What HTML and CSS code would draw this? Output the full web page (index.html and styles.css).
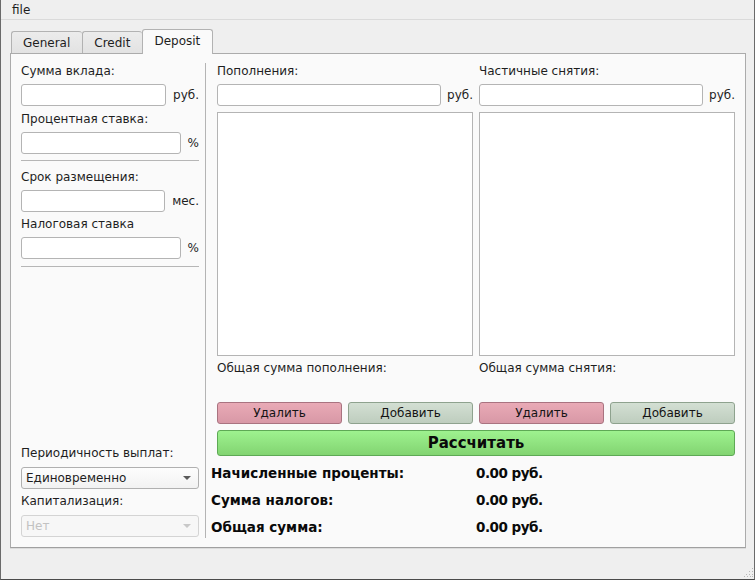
FILE: index.html
```html
<!DOCTYPE html>
<html lang="ru">
<head>
<meta charset="utf-8">
<title>Deposit</title>
<link rel="stylesheet" href="styles.css">
</head>
<body>
<div class="window">
  <div class="menubar"><span class="menu-item">file</span></div>
  <div class="main">
    <div class="tabbar">
      <div class="tab">General</div>
      <div class="tab">Credit</div>
      <div class="tab active">Deposit</div>
    </div>
    <div class="pane">
      <div class="left-col">
        <div class="lbl">Сумма вклада:</div>
        <div class="in-row"><div class="input"></div><span class="suffix">руб.</span></div>
        <div class="lbl">Процентная ставка:</div>
        <div class="in-row"><div class="input"></div><span class="suffix">%</span></div>
        <div class="hsep"></div>
        <div class="lbl">Срок размещения:</div>
        <div class="in-row"><div class="input"></div><span class="suffix">мес.</span></div>
        <div class="lbl lbl-tight">Налоговая ставка</div>
        <div class="in-row"><div class="input"></div><span class="suffix">%</span></div>
        <div class="hsep hsep-2"></div>
        <div class="spacer"></div>
        <div class="lbl">Периодичность выплат:</div>
        <div class="combo"><span>Единовременно</span><span class="arrow"></span></div>
        <div class="lbl">Капитализация:</div>
        <div class="combo disabled"><span>Нет</span><span class="arrow"></span></div>
      </div>
      <div class="vsep"></div>
      <div class="right-col">
        <div class="lists">
          <div class="list-col">
            <div class="lbl">Пополнения:</div>
            <div class="in-row"><div class="input"></div><span class="suffix">руб.</span></div>
            <div class="listbox"></div>
            <div class="lbl sum-lbl">Общая сумма пополнения:</div>
            <div class="btn-row">
              <div class="btn btn-del">Удалить</div>
              <div class="btn btn-add">Добавить</div>
            </div>
          </div>
          <div class="list-col">
            <div class="lbl">Частичные снятия:</div>
            <div class="in-row"><div class="input"></div><span class="suffix">руб.</span></div>
            <div class="listbox"></div>
            <div class="lbl sum-lbl">Общая сумма снятия:</div>
            <div class="btn-row">
              <div class="btn btn-del">Удалить</div>
              <div class="btn btn-add">Добавить</div>
            </div>
          </div>
          <div class="btn btn-calc">Рассчитать</div>
        </div>
        <div class="results">
          <div class="res-name">Начисленные проценты:</div><div class="res-val">0.00 руб.</div>
          <div class="res-name">Сумма налогов:</div><div class="res-val">0.00 руб.</div>
          <div class="res-name">Общая сумма:</div><div class="res-val">0.00 руб.</div>
        </div>
      </div>
    </div>
  </div>
  <svg class="grip" width="10" height="10" viewBox="0 0 10 10">
    <g fill="#b8b8b8">
      <rect x="8" y="0" width="1" height="1"/>
      <rect x="5" y="3" width="1" height="1"/><rect x="8" y="3" width="1" height="1"/>
      <rect x="2" y="6" width="1" height="1"/><rect x="5" y="6" width="1" height="1"/><rect x="8" y="6" width="1" height="1"/>
      <rect x="0" y="8" width="1" height="1"/><rect x="3" y="8" width="1" height="1"/><rect x="6" y="8" width="1" height="1"/><rect x="8" y="8" width="1" height="1"/>
    </g>
  </svg>
</div>
</body>
</html>
```
FILE: styles.css
```css
* { box-sizing: border-box; }
html, body { margin: 0; padding: 0; }
body {
  font-family: "DejaVu Sans", "Liberation Sans", sans-serif;
  font-size: 12px;
  color: #1e1e1e;
  background: #efefef;
}
.window {
  position: relative;
  width: 755px;
  height: 580px;
  background: #efefef;
  border-left: 1px solid #6a6a6a;
  border-right: 1px solid #6a6a6a;
  border-bottom: 1px solid #4a4a4a;
}
.menubar {
  height: 20px;
  line-height: 20px;
  border-bottom: 1px solid #dadada;
  padding-left: 11px;
}
.main {
  padding-left: 9px;
  padding-top: 9px;
}
.tabbar {
  display: flex;
  align-items: flex-end;
  height: 24px;
  padding-left: 1px;
}
.tab {
  height: 22px;
  line-height: 22px;
  padding: 0 12px 0 11px;
  border: 1px solid #b2b2b2;
  border-bottom: none;
  border-right: none;
  border-radius: 3px 3px 0 0;
  background: linear-gradient(#ececec, #e2e2e2);
  color: #1e1e1e;
}
.tab.active {
  height: 25px;
  line-height: 23px;
  margin-bottom: -1px;
  background: #fafafa;
  border-right: 1px solid #b2b2b2;
  position: relative;
  z-index: 1;
}
.pane {
  width: 736px;
  height: 495px;
  background: #fafafa;
  border: 1px solid #ababab;
  border-bottom-color: #a0a0a0;
  box-shadow: 0 1px 0 #dcdcdc;
  padding: 8px 9px 9px 10px;
  display: flex;
}
.left-col {
  width: 178px;
  height: 475px;
  display: flex;
  flex-direction: column;
}
.lbl {
  height: 18px;
  line-height: 18px;
  white-space: nowrap;
}
.lbl-tight { margin-top: -1px; }
.in-row {
  display: flex;
  align-items: center;
  gap: 7px;
  margin: 4px 0 4px;
}
.input {
  flex: 1;
  height: 22px;
  background: #ffffff;
  border: 1px solid #b4b4b4;
  border-radius: 3px;
}
.suffix { white-space: nowrap; }
.hsep {
  height: 1px;
  background: #b6b6b6;
  margin: 2px 0 7px;
}
.hsep-2 { margin-top: 3px; }
.spacer { flex: 1; }
.combo {
  height: 22px;
  margin: 5px 0 3px;
  border: 1px solid #b0b0b0;
  border-radius: 3px;
  background: linear-gradient(#fdfdfd, #f2f2f2);
  display: flex;
  align-items: center;
  justify-content: space-between;
  padding: 0 7px 0 4px;
}
.combo:last-child { margin-bottom: 0; }
.arrow {
  width: 0;
  height: 0;
  border-left: 4px solid transparent;
  border-right: 4px solid transparent;
  border-top: 4px solid #5a5a5a;
}
.combo.disabled {
  color: #c2c2c2;
  border-color: #d4d4d4;
  background: #f7f7f7;
}
.combo.disabled .arrow { border-top-color: #c8c8c8; }
.vsep {
  width: 1px;
  background: #b4b4b4;
  margin: 1px 5px 0 6px;
}
.right-col {
  width: 524px;
  display: flex;
  flex-direction: column;
}
.lists {
  padding-left: 6px;
  display: grid;
  grid-template-columns: 256px 256px;
  column-gap: 6px;
}
.list-col {
  display: flex;
  flex-direction: column;
}
.list-col .in-row { gap: 6px; margin-bottom: 0; }
.listbox {
  height: 244px;
  margin-top: 6px;
  background: #ffffff;
  border: 1px solid #b4b4b4;
}
.sum-lbl { margin-top: 3px; }
.btn-row {
  display: flex;
  gap: 6px;
  margin-top: 25px;
}
.btn {
  height: 22px;
  line-height: 20px;
  text-align: center;
  border-radius: 3px;
  color: #141414;
}
.btn-row .btn { flex: 1; }
.btn-del {
  background: linear-gradient(#e9aab6, #d898a6);
  border: 1px solid #a97380;
}
.btn-add {
  background: linear-gradient(#d3dfd3, #becdbe);
  border: 1px solid #8ea28e;
}
.btn-calc {
  grid-column: 1 / span 2;
  margin-top: 6px;
  height: 26px;
  line-height: 24px;
  font-weight: bold;
  font-size: 15px;
  color: #0a0a0a;
  background: linear-gradient(#9ef28f, #82d471);
  border: 1px solid #5ea955;
}
.results {
  margin-top: 3px;
  display: grid;
  grid-template-columns: 265px auto;
  grid-auto-rows: 27px;
  align-items: center;
  font-weight: bold;
  font-size: 13.5px;
  color: #0a0a0a;
}
.res-val { letter-spacing: -0.5px; }
.grip {
  position: absolute;
  right: 0;
  bottom: 1px;
}
```
